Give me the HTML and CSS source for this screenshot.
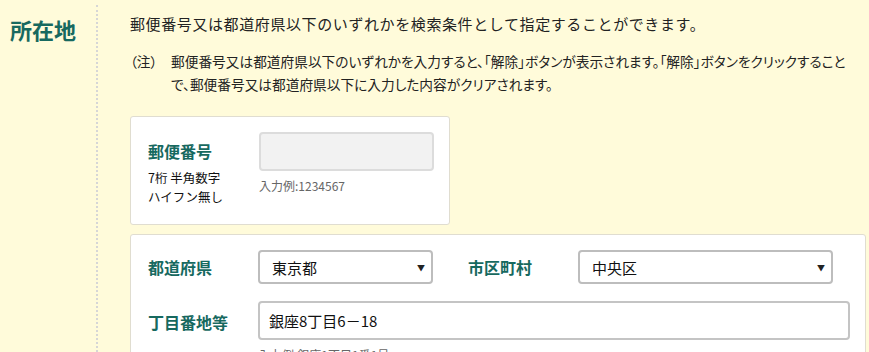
FILE: index.html
```html
<!DOCTYPE html>
<html lang="ja">
<head>
<meta charset="utf-8">
<title>所在地</title>
<link rel="stylesheet" href="styles.css">
</head>
<body>
<div class="section">
  <div class="section-head">所在地</div>
  <div class="section-body">
    <p class="lead">郵便番号又は都道府県以下のいずれかを検索条件として指定することができます。</p>
    <div class="note">
      <span class="note-mark">（注）</span>
      <span class="note-text">郵便番号又は都道府県以下のいずれかを入力すると、「解除」ボタンが表示されます。「解除」ボタンをクリックすることで、郵便番号又は都道府県以下に入力した内容がクリアされます。</span>
    </div>

    <div class="card card-zip">
      <div class="label-col">
        <div class="label">郵便番号</div>
        <div class="sub">7桁 半角数字<br>ハイフン無し</div>
      </div>
      <div class="field-col">
        <div class="input input-disabled"></div>
        <div class="hint">入力例:1234567</div>
      </div>
    </div>

    <div class="card card-addr">
      <div class="row">
        <div class="label label-w">都道府県</div>
        <div class="select select-pref"><span>東京都</span><span class="arrow">▼</span></div>
        <div class="label label-city">市区町村</div>
        <div class="select select-city"><span>中央区</span><span class="arrow">▼</span></div>
      </div>
      <div class="row row-street">
        <div class="label label-w">丁目番地等</div>
        <div class="street-col">
          <div class="input input-street">銀座8丁目6－18</div>
          <div class="hint">入力例:銀座1丁目1番1号</div>
        </div>
      </div>
    </div>
  </div>
</div>
</body>
</html>
```

FILE: styles.css
```css
html, body {
  margin: 0;
  padding: 0;
  background: #fffbda;
  font-family: "Noto Sans CJK JP", "Noto Sans", sans-serif;
  color: #222;
  overflow: hidden;
}
.section {
  display: flex;
  margin-top: 5px;
  height: 347px;
}
.section-head {
  width: 86px;
  padding-left: 10px;
  padding-top: 9px;
  font-size: 22px;
  font-weight: 700;
  color: #17695f;
  line-height: 30px;
}
.section-body {
  border-left: 2px dotted #d6d6d6;
  padding-left: 32px;
  padding-top: 7px;
  flex: 1;
}
.lead {
  margin: 0;
  font-size: 15px;
  letter-spacing: 0.6px;
  line-height: 24px;
}
.note {
  display: flex;
  margin-top: 14px;
  font-size: 13.7px;
  line-height: 23px;
  font-feature-settings: "palt";
  width: 724px;
}
.note-mark {
  width: 41px;
  flex: none;
}
.note-text {
  flex: 1;
}
.card {
  background: #fff;
  border: 1px solid #e0ddd0;
  border-radius: 3px;
}
.card-zip {
  margin-top: 20px;
  width: 320px;
  height: 109px;
  display: flex;
  box-sizing: border-box;
  padding: 15px 0 0 17px;
}
.label-col {
  width: 111px;
}
.label {
  font-size: 16px;
  font-weight: 700;
  color: #17695f;
  line-height: 22px;
}
.card-zip .label {
  margin-top: 8px;
}
.sub {
  margin-top: 6px;
  font-size: 12.5px;
  line-height: 19px;
  color: #111;
}
.input {
  box-sizing: border-box;
  border: 2px solid #c9c9c9;
  border-radius: 4px;
  background: #fff;
}
.input-disabled {
  width: 175px;
  height: 39px;
  background: #f2f2f2;
  border-color: #dcdcdc;
}
.hint {
  margin-top: 6px;
  font-size: 12px;
  line-height: 18px;
  color: #666;
}
.card-addr {
  margin-top: 9px;
  width: 736px;
  height: 140px;
  box-sizing: border-box;
  padding: 15px 0 0 17px;
}
.row {
  display: flex;
  align-items: center;
}
.label-w {
  width: 110px;
}
.select {
  box-sizing: border-box;
  height: 34px;
  border: 2px solid #bdbdbd;
  border-radius: 4px;
  display: flex;
  align-items: center;
  justify-content: space-between;
  padding: 0 6px 0 12px;
  font-size: 15px;
  color: #111;
}
.select-pref {
  width: 175px;
}
.select-city {
  width: 255px;
}
.arrow {
  font-size: 8px;
  color: #222;
}
.label-city {
  margin-left: 35px;
  width: 110px;
}
.row-street {
  margin-top: 17px;
  align-items: flex-start;
}
.row-street .label {
  margin-top: 10px;
}
.input-street {
  width: 592px;
  height: 39px;
  border-color: #c4c4c4;
  font-size: 15px;
  line-height: 35px;
  padding-left: 9px;
  color: #111;
}
```
